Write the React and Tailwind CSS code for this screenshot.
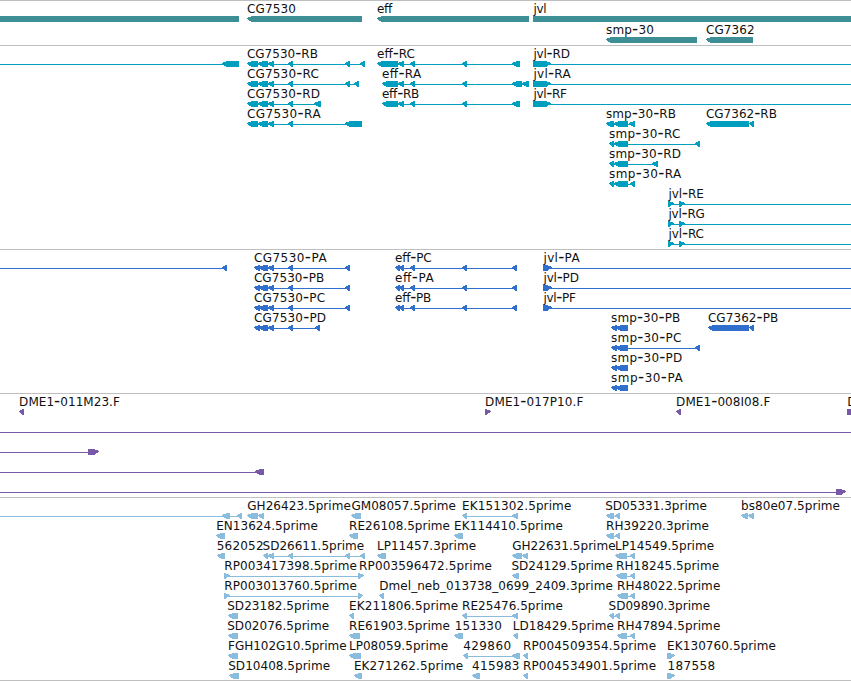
// Each row lists labels as [text, inkStart, inkEnd], exons as
// [start, end, strand] and connector lines as [start, end].
const L = -1;
const R = 1;

const shift = (exons, dir = L) => exons.map(([a, b]) => [a, b, dir]);

const cgTail = shift([[247, 258], [258, 268], [268, 274], [288, 293]]);
const effTail = shift([[398, 404], [410, 415], [462, 467]]);
const jvlHead = [533, 551, R];
const smpHead = shift([[609, 614], [614, 628]]);
const jvlShort = [[668, 674, R], [679, 685, R]];
const cgProt = shift([[254, 260], [259, 268], [268, 274], [288, 293]]);
const effProt = shift([[395, 400], [399, 404], [410, 415], [462, 467], [512, 517]]);
const smpProt = shift([[611, 617], [616, 628]]);

const tracks = [
  {
    name: "genes",
    box: "h-[45px]",
    row: "h-[21px]",
    color: "#3e8e95",
    rows: [
      {
        labels: [["CG7530", 247.7, 295.3], ["eff", 377.8, 391.7], ["jvl", 534.3, 546]],
        exons: [[-10, 239, R, true], [247, 362, L], [377, 529, L], [533, 870, R, true]],
      },
      {
        labels: [["smp-30", 606.8, 653.3], ["CG7362", 706.7, 754]],
        exons: [[606, 697, L], [706, 753, L]],
      },
    ],
  },
  {
    name: "transcripts",
    box: "h-[204px]",
    row: "h-5",
    color: "#009fbf",
    rows: [
      {
        labels: [["CG7530-RB", 247.7, 317.3], ["eff-RC", 377.8, 414.3], ["jvl-RD", 534.3, 569.3]],
        exons: [[222, 239, L], ...cgTail, [345, 350, L], [360, 365, L], [377, 398, L], ...effTail, [512, 520, L], jvlHead],
        lines: [[0, 230], [250, 364], [390, 516], [540, 851]],
      },
      {
        labels: [["CG7530-RC", 247.7, 318.3], ["eff-RA", 382.8, 420.7], ["jvl-RA", 534.3, 570]],
        exons: [...cgTail, [345, 350, L], [354, 359, L], [382, 398, L], ...effTail, [512, 522, L], [522, 529, L], jvlHead],
        lines: [[250, 358], [390, 528], [540, 851]],
      },
      {
        labels: [["CG7530-RD", 247.7, 319.3], ["eff-RB", 382.8, 418.7], ["jvl-RF", 534.3, 566.3]],
        exons: [...cgTail, [314, 321, L], [382, 398, L], ...effTail, [512, 520, L], jvlHead],
        lines: [[250, 318], [390, 516], [540, 851]],
      },
      {
        labels: [["CG7530-RA", 247.7, 320], ["smp-30-RB", 606.8, 675.3], ["CG7362-RB", 706.7, 776.3]],
        exons: [...cgTail, [345, 362, L], [606, 614, L], [614, 628, L], [629, 635, L], [706, 749, L], [749, 754, L]],
        lines: [[250, 350], [610, 634]],
      },
      { labels: [["smp-30-RC", 609.8, 679.7]], exons: [...smpHead, [695, 700, L]], lines: [[612, 698]] },
      { labels: [["smp-30-RD", 609.8, 680.3]], exons: [...smpHead, [652, 658, L]], lines: [[612, 656]] },
      { labels: [["smp-30-RA", 609.8, 680.7]], exons: [...smpHead, [630, 635, L]], lines: [[612, 634]] },
      { labels: [["jvl-RE", 669.3, 703.3]], exons: jvlShort, lines: [[670, 851]] },
      { labels: [["jvl-RG", 669.3, 704.3]], exons: jvlShort, lines: [[670, 851]] },
      { labels: [["jvl-RC", 669.3, 703.3]], exons: jvlShort, lines: [[670, 851]] },
    ],
  },
  {
    name: "proteins",
    box: "h-[144px]",
    row: "h-5",
    color: "#316fcd",
    rows: [
      {
        labels: [["CG7530-PA", 254.7, 326], ["eff-PC", 395.8, 431], ["jvl-PA", 544.3, 579]],
        exons: [[222, 227, L], ...cgProt, [345, 350, L], ...effProt, [543, 552, R]],
        lines: [[0, 224], [258, 348], [397, 515], [546, 851]],
      },
      {
        labels: [["CG7530-PB", 254.7, 323.7], ["eff-PA", 395.8, 433], ["jvl-PD", 544.3, 578.3]],
        exons: [...cgProt, [345, 350, L], ...effProt, [543, 552, R]],
        lines: [[258, 348], [397, 515], [546, 851]],
      },
      {
        labels: [["CG7530-PC", 254.7, 324.5], ["eff-PB", 395.8, 430.7], ["jvl-PF", 544.3, 575.3]],
        exons: [...cgProt, [345, 350, L], ...effProt, [543, 552, R]],
        lines: [[258, 348], [397, 515], [546, 851]],
      },
      {
        labels: [["CG7530-PD", 254.7, 325.5], ["smp-30-PB", 611.9, 679.7], ["CG7362-PB", 708.7, 777.7]],
        exons: [...cgProt, [315, 320, L], ...smpProt, [708, 749, L], [749, 754, L]],
        lines: [[258, 318]],
      },
      { labels: [["smp-30-PC", 611.9, 680.7]], exons: [...smpProt, [695, 700, L]], lines: [[620, 698]] },
      { labels: [["smp-30-PD", 611.9, 681.7]], exons: smpProt },
      { labels: [["smp-30-PA", 611.9, 682]], exons: smpProt },
    ],
  },
  {
    name: "bac-ends",
    box: "h-[104px]",
    row: "h-5",
    color: "#7759a7",
    rows: [
      {
        labels: [["DME1-011M23.F", 19.9, 119.3], ["DME1-017P10.F", 485.9, 582.7], ["DME1-008I08.F", 676.9, 769.7], ["D", 848, 856]],
        exons: [[19, 24, L], [485, 491, R], [676, 681, L], [847, 870, R, true]],
      },
      { lines: [[0, 851]] },
      { exons: [[88, 99, R]], lines: [[0, 90]] },
      { exons: [[255, 264, L]], lines: [[0, 258]] },
      { exons: [[836, 846, R]], lines: [[0, 838]] },
    ],
  },
  {
    name: "ests",
    box: "h-[183px]",
    row: "h-5",
    color: "#8abddd",
    rows: [
      {
        labels: [["GH26423.5prime", 248, 350.3], ["GM08057.5prime", 352.3, 455.3], ["EK151302.5prime", 462.9, 570.7], ["SD05331.3prime", 606, 706.3], ["bs80e07.5prime", 741.9, 839.3]],
        exons: [[222, 230, L], [237, 242, L], [247, 258, L], [258, 264, L], [351, 361, L], [462, 467, L], [512, 518, L], [606, 614, L], [615, 620, L], [741, 748, L], [748, 754, L]],
        lines: [[0, 240], [464, 516], [610, 618]],
      },
      {
        labels: [["EN13624.5prime", 217, 317.3], ["RE26108.5prime", 349.9, 449.3], ["EK114410.5prime", 454.9, 562.3], ["RH39220.3prime", 606.9, 708.3]],
        exons: [[216, 225, L], [349, 358, L], [454, 463, L], [606, 614, L], [615, 620, L]],
        lines: [[610, 618]],
      },
      {
        labels: [["562052", 217.5, 263], ["SD26611.5prime", 263.3, 363.5], ["LP11457.3prime", 377.7, 475.5], ["GH22631.5prime", 513, 615], ["LP14549.5prime", 615.9, 713.5]],
        exons: [[217, 225, L], [263, 268, L], [268, 274, L], [288, 293, L], [345, 350, L], [360, 365, L], [377, 386, L], [512, 522, L], [522, 528, L], [615, 627, L], [630, 635, L]],
        lines: [[266, 363], [622, 633]],
      },
      {
        labels: [["RP003417398.5prime", 225, 356.3], ["RP003596472.5prime", 359.9, 491.3], ["SD24129.5prime", 512.3, 612.3], ["RH18245.5prime", 616.9, 718.5]],
        exons: [[224, 230, R], [358, 364, R], [512, 519, L], [616, 627, L], [630, 635, L]],
        lines: [[226, 360], [622, 633]],
      },
      {
        labels: [["RP003013760.5prime", 225, 356.3], ["Dmel_neb_013738_0699_2409.3prime", 380, 612.3], ["RH48022.5prime", 617.9, 719.7]],
        exons: [[224, 230, R], [358, 363, R], [379, 384, L], [617, 628, L], [630, 635, L]],
        lines: [[226, 360], [622, 633]],
      },
      {
        labels: [["SD23182.5prime", 228, 328.5], ["EK211806.5prime", 349.9, 457.5], ["RE25476.5prime", 462.9, 562.3], ["SD09890.3prime", 609.3, 709.5]],
        exons: [[228, 238, L], [349, 354, L], [462, 467, L], [512, 518, L], [609, 614, L], [615, 620, L]],
        lines: [[464, 516], [612, 618]],
      },
      {
        labels: [["SD02076.5prime", 228, 328.5], ["RE61903.5prime", 349.9, 449.3], ["151330", 455.5, 501.3], ["LD18429.5prime", 513.5, 613.3], ["RH47894.5prime", 617.9, 719.7]],
        exons: [[228, 238, L], [349, 360, L], [454, 463, L], [513, 518, L], [617, 627, L], [630, 635, L]],
        lines: [[622, 633]],
      },
      {
        labels: [["FGH102G10.5prime", 228.9, 346], ["LP08059.5prime", 349.7, 447.5], ["429860", 464, 510.5], ["RP004509354.5prime", 523.7, 655.5], ["EK130760.5prime", 667.9, 775.3]],
        exons: [[228, 238, L], [349, 361, L], [463, 468, L], [512, 520, L], [523, 528, L], [667, 675, R]],
        lines: [[466, 516]],
      },
      {
        labels: [["SD10408.5prime", 229, 329.5], ["EK271262.5prime", 354.7, 462.5], ["415983", 472.9, 518.9], ["RP004534901.5prime", 523.7, 655.5], ["187558", 668.3, 714.5]],
        exons: [[229, 239, L], [354, 362, L], [472, 480, L], [523, 528, L], [667, 675, R]],
      },
    ],
  },
];

// Exon body between y=14 and y=20, with a pointed end on its strand's side.
function exonPoints([a, b, dir, square]) {
  if (square) return `${a},14 ${b},14 ${b},20 ${a},20`;
  const head = Math.min(5, b - a - 1);
  return dir === L
    ? `${a},16 ${a + head},14 ${b},14 ${b},20 ${a + head},20 ${a},17`
    : `${b},16 ${b - head},14 ${a},14 ${a},20 ${b - head},20 ${b},17`;
}

// Hyphens are set larger so that they read as wide dashes.
function Label({ text }) {
  return text.split(/(-)/).map((part, i) =>
    part === "-" ? (
      <tspan key={i} className="text-[17px]">
        -
      </tspan>
    ) : (
      <tspan key={i}>{part}</tspan>
    )
  );
}

function Row({ row, color, height }) {
  const { labels = [], exons = [], lines = [] } = row;
  return (
    <svg className={`block w-full shrink-0 overflow-visible ${height}`}>
      <g fill={color} shapeRendering="crispEdges">
        {lines.map(([a, b], i) => (
          <rect key={i} x={a} y={17} width={b - a} height={1} />
        ))}
        {exons.map((e, i) => (
          <polygon key={i} points={exonPoints(e)} />
        ))}
      </g>
      {labels.map(([text, a, b]) => (
        <text
          key={text}
          x={a - 0.8}
          y={11}
          textLength={b - a + 1.4}
          className="fill-[#111111] font-['DejaVu_Sans',sans-serif] text-[12px]"
        >
          <Label text={text} />
        </text>
      ))}
    </svg>
  );
}

export default function App() {
  return (
    <main className="flex h-[681px] w-[851px] flex-col overflow-hidden bg-white">
      {tracks.map((t) => (
        <section key={t.name} className={`flex shrink-0 flex-col border-t border-[#bfbfbf] pt-px ${t.box}`}>
          {t.rows.map((row, i) => (
            <Row key={i} row={row} color={t.color} height={t.row} />
          ))}
        </section>
      ))}
      <div className="h-px shrink-0 bg-[#bfbfbf]" />
    </main>
  );
}
